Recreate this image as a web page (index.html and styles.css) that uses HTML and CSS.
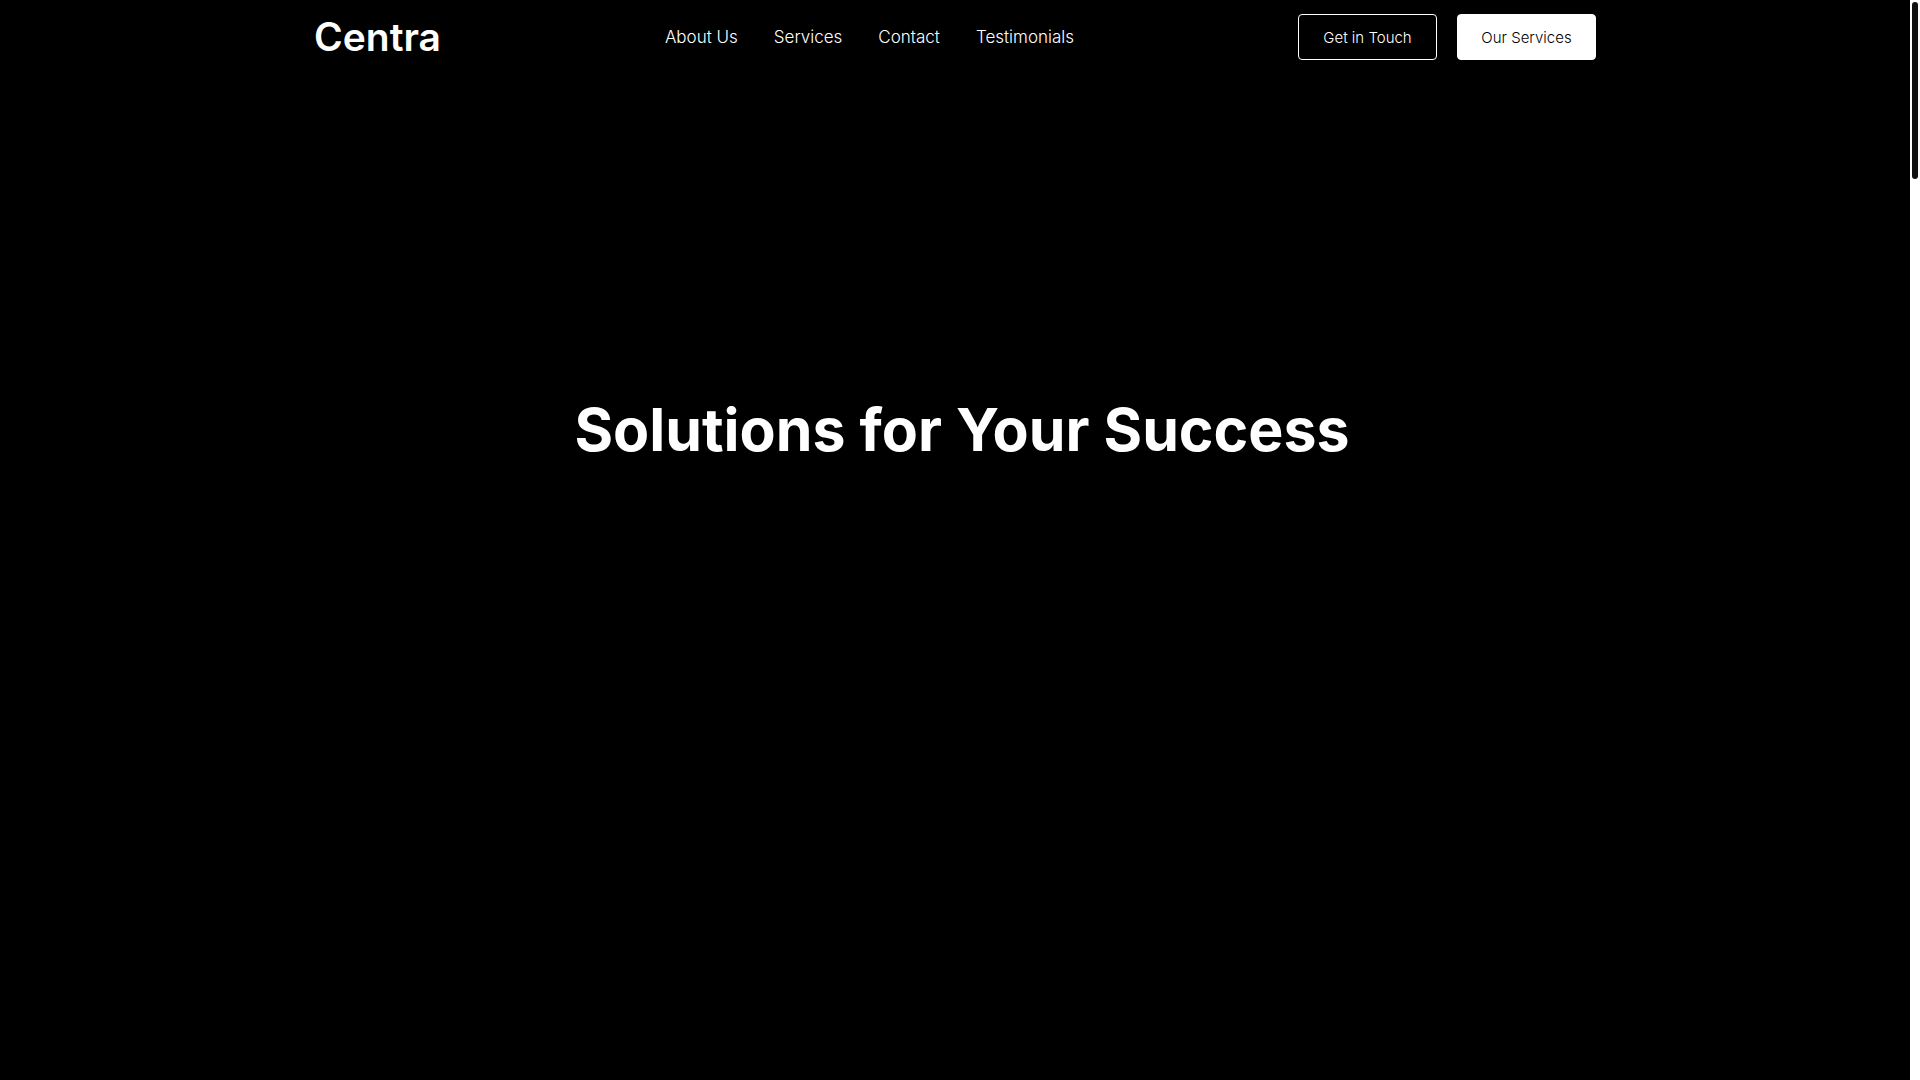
FILE: index.html
```html
<!DOCTYPE html>
<html lang="en">
  <head>
    <meta charset="UTF-8" />
    <meta name="viewport" content="width=device-width, initial-scale=1.0" />
    <title>Centra</title>
    <link rel="stylesheet" href="styles.css">
  </head>
  <body>
    <header class="header">
      <div class="container">
        <a class="logo" href="#">Centra</a>
        <nav class="nav">
          <a href="#about">About Us</a>
          <a href="#services">Services</a>
          <a href="#contact">Contact</a>
          <a href="#testimonials">Testimonials</a>
        </nav>
        <div class="actions">
          <button class="btn" type="button">Get in Touch</button>
          <button class="btn btn-light" type="button">Our Services</button>
        </div>
      </div>
    </header>

    <main class="hero">
      <h1>Solutions for Your Success</h1>
    </main>

    <div class="scrollbar" aria-hidden="true">
      <div class="scrollbar-thumb"></div>
    </div>
  </body>
</html>
```
FILE: styles.css
```css
* {
  box-sizing: border-box;
}

body {
  margin: 0;
  padding-right: 10px;
  min-height: 100vh;
  display: flex;
  flex-direction: column;
  background-color: #000;
  color: #fff;
  font-family: Inter, "Open Sans", sans-serif;
}

.header {
  padding: 14px 20px;
}

.container {
  display: flex;
  justify-content: space-between;
  align-items: center;
  max-width: 1282px;
  margin: 0 auto;
}

.logo {
  font-size: 39px;
  font-weight: 600;
  line-height: 46px;
  color: #fff;
  text-decoration: none;
}

.nav {
  display: flex;
  gap: 36px;
}

.nav a {
  font-size: 17px;
  font-weight: 300;
  line-height: 24px;
  color: #fff;
  text-decoration: none;
}

.actions {
  display: flex;
  gap: 20px;
}

.btn {
  min-width: 139px;
  height: 46px;
  padding: 0 20px;
  border: 1px solid #fff;
  border-radius: 4px;
  background-color: #000;
  color: #fff;
  font-family: inherit;
  font-size: 15px;
  font-weight: 300;
  cursor: pointer;
}

.btn-light {
  background-color: #fff;
  color: #000;
}

.hero {
  padding: 320px 10px 320px 24px;
  text-align: center;
}

.hero h1 {
  margin: 0;
  font-size: 59px;
  font-weight: 700;
  line-height: 72px;
}

.scrollbar {
  position: fixed;
  top: 0;
  right: 0;
  bottom: 0;
  width: 10px;
  padding: 2px;
  background-color: #fff;
}

.scrollbar-thumb {
  height: 177px;
  border-radius: 3px;
  background-color: #111;
}
```
